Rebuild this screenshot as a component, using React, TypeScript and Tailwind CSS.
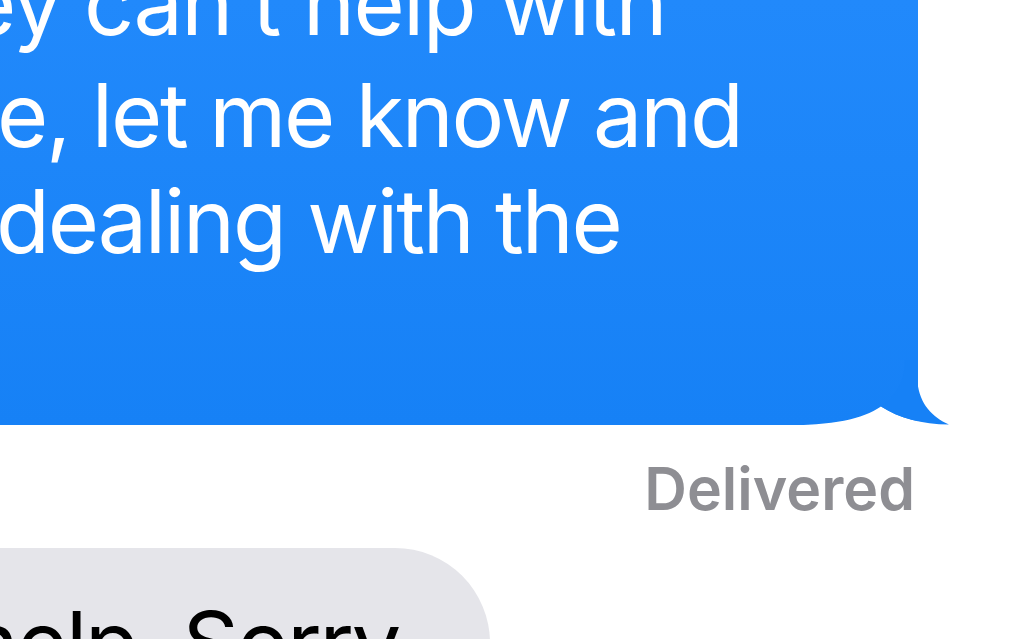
import React from "react";

export default function App() {
  return (
    <div
      className="w-[1024px] h-[639px] overflow-hidden bg-white flex flex-col"
      style={{ fontFamily: "Inter, 'Noto Sans', sans-serif" }}
    >
      {/* Blue outgoing bubble */}
      <div className="relative w-[918px] h-[425px] shrink-0 bg-gradient-to-b from-[#2189fb] to-[#1681f6]">
        <div className="overflow-hidden h-full">
          <div className="text-white text-[88px] leading-[106px] tracking-[-2.2px] whitespace-nowrap mt-[-50px]">
            <div className="ml-[-35px] mb-[6px] tracking-[-1.6px]">ey can’t help with</div>
            <div className="ml-[-3px]">e, let me know and</div>
            <div className="ml-[-4px]">dealing with the</div>
          </div>
        </div>
        <svg
          className="absolute left-[-2px] top-0 w-[960px] h-[445px]"
          viewBox="-2 0 960 445"
        >
          <path
            d="M780 425.5 C835 425.5 862 419 881 406.5 C899 418 922 424.5 949 424.5 L949 445 L780 445 Z"
            fill="#ffffff"
          />
          <path
            d="M917.5 360 L917.5 383 C920 404 932 417 949 424.5 C922 424.5 899 418 881 406.5 C893 398 905 385 905 360 Z"
            fill="#1681f6"
          />
        </svg>
      </div>

      {/* Delivered */}
      <div className="w-[918px] text-right pr-[3px] mt-[29px] text-[#8e8e93] text-[59px] leading-[70px] font-semibold">
        Delivered
      </div>

      {/* Grey incoming bubble */}
      <div className="mt-[24px] w-[490px] h-[200px] shrink-0 bg-[#e5e5ea] rounded-tr-[95px] overflow-hidden">
        <div className="text-black text-[88px] leading-[106px] tracking-[-2.2px] whitespace-nowrap mt-[42px] ml-[-33px]">
          help. Sorry
        </div>
      </div>
    </div>
  );
}
